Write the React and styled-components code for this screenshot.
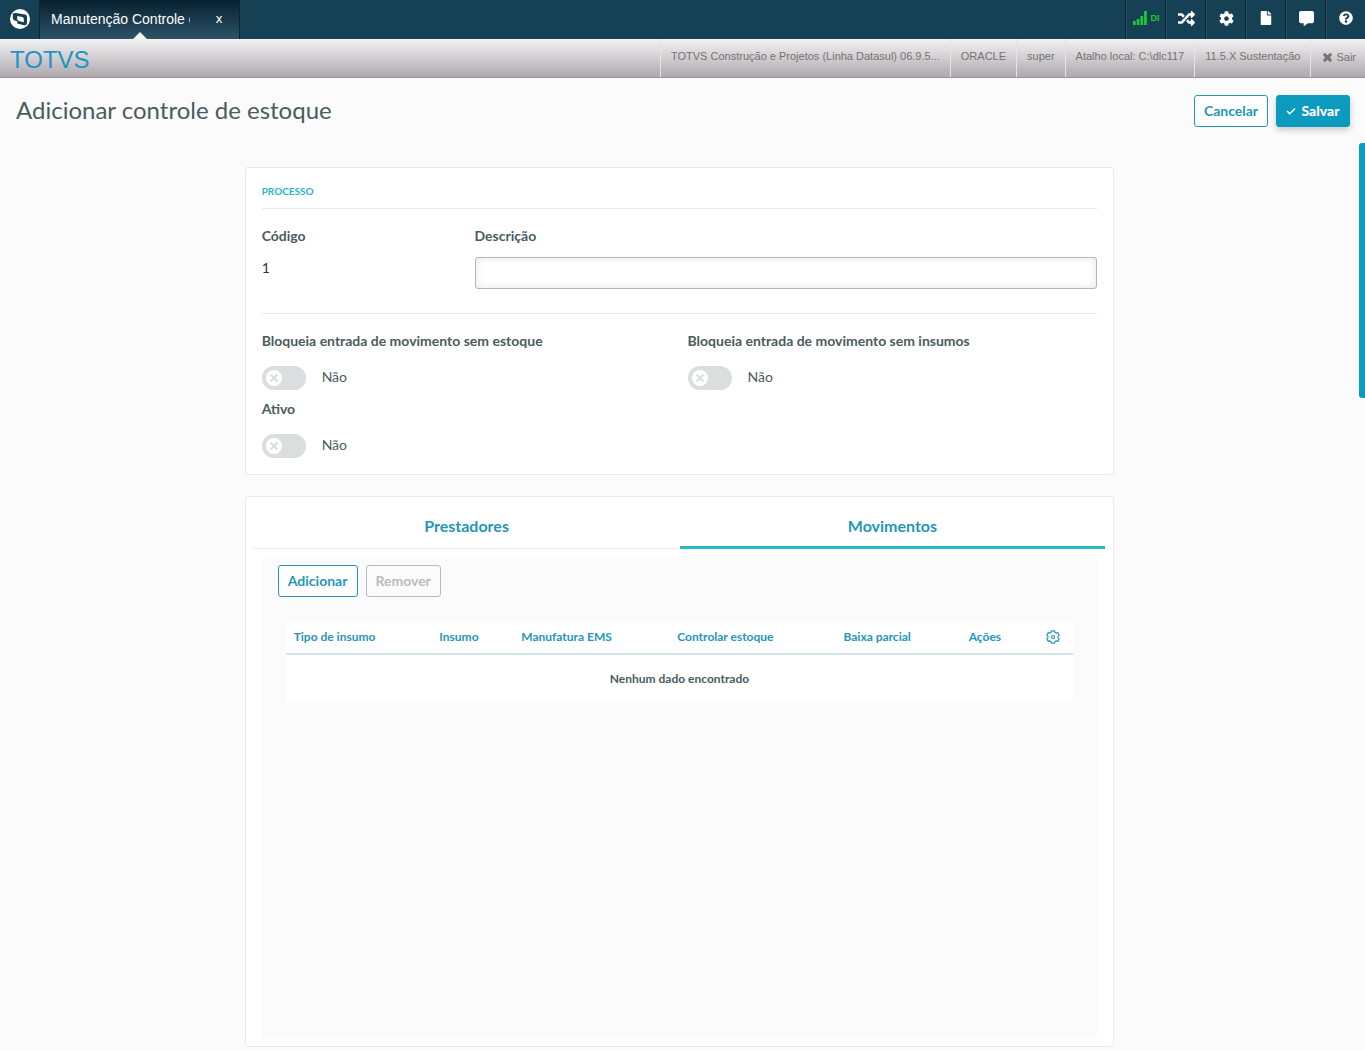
import React, { useState } from 'react';
import styled, { createGlobalStyle, css } from 'styled-components';
import {
  FaRandom,
  FaCog,
  FaFile,
  FaCommentAlt,
  FaQuestionCircle,
  FaTimes,
} from 'react-icons/fa';

const blue = '#2596b8';
const teal = '#29b6c5';
const gray = '#4a5c60';
const line = '#eaeaea';

const GlobalStyle = createGlobalStyle`
  * {
    box-sizing: border-box;
  }
  body {
    margin: 0;
    background: #fbfbfb;
    color: ${gray};
    font: 14px/22px Lato, sans-serif;
  }
  button, input {
    font: inherit;
  }
`;

const Page = styled.div`
  display: flex;
  flex-direction: column;
  height: 100vh;
  overflow: hidden;
`;

const TopBar = styled.header`
  display: flex;
  flex: none;
  height: 39px;
  background: #164154;
  font-family: 'Liberation Sans', sans-serif;
`;

const LogoButton = styled.button`
  display: grid;
  place-items: center;
  width: 40px;
  padding: 0 0 1px;
  border: 0;
  border-right: 1px solid #0a2635;
  background: none;
`;

const WindowTab = styled.div`
  position: relative;
  display: flex;
  align-items: center;
  justify-content: space-between;
  width: 200px;
  padding: 0 14px 2px 11px;
  border-right: 1px solid #0a2635;
  background: linear-gradient(#07202f, #2c5368);
  color: #fff;

  &::after {
    content: '';
    position: absolute;
    bottom: 0;
    left: calc(50% - 7px);
    border: 7px solid transparent;
    border-top: 0;
    border-bottom-color: #f4f4f4;
  }
`;

const TabTitle = styled.span`
  width: 139px;
  overflow: hidden;
  white-space: nowrap;
`;

const TabClose = styled.button`
  width: 12px;
  padding: 0;
  border: 0;
  background: none;
  color: #fff;
  font: 12px 'DejaVu Sans', sans-serif;
`;

const Tools = styled.div`
  display: flex;
  margin-left: auto;
`;

const Tool = styled.button`
  display: flex;
  align-items: center;
  justify-content: center;
  gap: 4px;
  width: 40px;
  padding: 0 0 3px 1px;
  border: 0;
  border-left: 1px solid #0a2635;
  box-shadow: inset 1px 0 #2c5163;
  background: none;
  color: ${(props) => (props.$online ? '#1fc934' : '#fff')};
  font-size: 9px;
  font-weight: 700;
`;

const BrandBar = styled.div`
  display: flex;
  flex: none;
  justify-content: space-between;
  height: 39px;
  border-bottom: 1px solid #979197;
  background: linear-gradient(#f2f2f2, #afa8af);
  font-family: 'Liberation Sans', sans-serif;
`;

const Brand = styled.div`
  padding-left: 10px;
  color: #1c94c4;
  font-size: 24px;
  line-height: 41px;
`;

const Session = styled.div`
  display: flex;
  color: #737373;
  font-size: 11px;
  line-height: 35px;
`;

const SessionItem = styled.span`
  padding: 0 10px;
  border-left: 1px solid #e4e4e4;
`;

const Exit = styled.a`
  display: flex;
  align-items: center;
  gap: 3px;
  padding: 0 9px 2px 11px;
  border-left: 1px solid #e4e4e4;
  color: #737373;
  text-decoration: none;

  svg {
    stroke: currentColor;
    stroke-width: 50px;
    overflow: visible;
  }
`;

const PageHeader = styled.div`
  display: flex;
  flex: none;
  align-items: center;
  justify-content: space-between;
  height: 65px;
  padding: 0 15px 0 16px;
`;

const Title = styled.h1`
  margin: 0;
  padding-bottom: 2px;
  font-size: 24px;
  font-weight: 400;
`;

const Actions = styled.div`
  display: flex;
  gap: 8px;
`;

const Button = styled.button`
  height: 32px;
  min-width: ${(props) => props.$width}px;
  padding: 0 8px;
  border: 1px solid ${blue};
  border-radius: 3px;
  background: #fff;
  color: ${blue};
  font-weight: 700;
  line-height: 30px;

  ${(props) =>
    props.$primary &&
    css`
      display: flex;
      align-items: center;
      justify-content: center;
      gap: 5px;
      border-color: #0c9abe;
      background: #0c9abe;
      color: #fff;
      font-weight: 900;
      box-shadow: 0 3px 6px rgba(0, 0, 0, 0.2);
    `}

  &:disabled {
    border-color: #b6bdbf;
    background: #fbfbfb;
    color: #b6bdbf;
  }
`;

const Scroller = styled.main`
  display: flex;
  flex: 1;
  min-height: 0;
`;

const Content = styled.div`
  display: flex;
  flex: 1;
  flex-direction: column;
  align-items: center;
  gap: 21px;
  padding: 24px 0 0;
`;

const ScrollThumb = styled.div`
  flex: none;
  width: 6px;
  height: 255px;
  border-radius: 3px 0 0 3px;
  background: #0c9abe;
`;

const Card = styled.section`
  width: 64%;
  min-width: 640px;
  border: 1px solid ${line};
  border-radius: 3px;
  background: #fff;
`;

const FormCard = styled(Card)`
  padding: 16px 16px 12px;
`;

const SectionTitle = styled.h2`
  margin: 0 0 16px;
  padding-bottom: 9px;
  border-bottom: 1px solid ${line};
  color: ${teal};
  font-size: 10px;
  font-weight: 700;
  line-height: 15px;
`;

const FieldRow = styled.div`
  display: grid;
  grid-template-columns: repeat(4, 1fr);
  gap: 16px;
  padding-bottom: 24px;
  border-bottom: 1px solid ${line};
`;

const WideField = styled.div`
  grid-column: span 3;
`;

const SwitchGrid = styled.div`
  display: grid;
  grid-template-columns: 1fr 1fr;
  column-gap: 16px;
  padding-top: 16px;
`;

const Label = styled.label`
  display: block;
  font-weight: 700;
`;

const Value = styled.output`
  display: block;
  padding-top: 10px;
  color: #2b3538;
`;

const TextInput = styled.input`
  display: block;
  width: 100%;
  height: 32px;
  margin-top: 10px;
  padding: 0 8px;
  border: 1px solid #b2b6b8;
  border-radius: 3px;
  box-shadow: inset 0 0 8px rgba(0, 0, 0, 0.1);
`;

const SwitchField = styled.div`
  height: 68px;

  &:last-child {
    height: 64px;
  }
`;

const SwitchLine = styled.div`
  display: flex;
  align-items: center;
  gap: 16px;
  padding-top: 14px;
`;

const SwitchText = styled.span`
  padding-bottom: 2px;
`;

const SwitchTrack = styled.span`
  position: relative;
  width: 44px;
  height: 24px;
  padding: 4px;
  border-radius: 12px;
  background: ${(props) => (props.$on ? teal : '#dadedf')};

  input {
    position: absolute;
    inset: 0;
    width: 100%;
    height: 100%;
    margin: 0;
    opacity: 0;
  }

  svg {
    display: block;
    margin-left: ${(props) => (props.$on ? 20 : 0)}px;
  }
`;

const TabCard = styled(Card)`
  padding: 8px;
`;

const Tabs = styled.div`
  display: grid;
  grid-template-columns: 1fr 1fr;
  height: 44px;
`;

const Tab = styled.button`
  padding: 0 0 2px;
  border: solid ${line};
  border-width: 0 0 1px;
  background: none;
  color: ${blue};
  font-size: 16px;
  font-weight: 700;
  ${(props) =>
    props.$active &&
    css`
      padding-bottom: 0;
      border-color: ${teal};
      border-bottom-width: 3px;
    `}
`;

const Panel = styled.div`
  height: 481px;
  margin: 8px 8px 0;
  padding: 8px 16px;
  background: #fbfbfb;
`;

const TableWrap = styled.div`
  padding: 24px 8px 0;
`;

const Table = styled.table`
  width: 100%;
  border-collapse: collapse;
  table-layout: fixed;
  background: #fff;
  font-size: 12px;
  line-height: 18px;
`;

const HeadCell = styled.th`
  width: ${(props) => props.$width}%;
  height: 33px;
  padding: 0 8px;
  border-bottom: 2px solid #d3e5eb;
  color: ${blue};
  text-align: left;
`;

const EmptyCell = styled.td`
  height: 48px;
  padding: 0;
  font-weight: 700;
  text-align: center;
`;

const GearButton = styled.button`
  display: block;
  margin: 0 auto;
  padding: 0;
  border: 0;
  background: none;
  color: ${blue};

  svg {
    display: block;
  }
`;

const columns = [
  { name: 'Tipo de insumo', width: 18.5 },
  { name: 'Insumo', width: 10.4 },
  { name: 'Manufatura EMS', width: 19.8 },
  { name: 'Controlar estoque', width: 21.1 },
  { name: 'Baixa parcial', width: 15.9 },
  { name: 'Ações', width: 9.2 },
];

const session = [
  'TOTVS Construção e Projetos (Linha Datasul) 06.9.5...',
  'ORACLE',
  'super',
  'Atalho local: C:\\dlc117',
  '11.5.X Sustentação',
];

function Logo() {
  return (
    <svg width="22" height="22" viewBox="0 0 22 22">
      <circle cx="11" cy="11" r="10" fill="#fff" />
      <path
        d="M3.800 6Q4 4.800 7 5l9 1.600q2 .4 2 2.400v6q0 2.500-3 2.200l-6.800-1.700v-2.200l-2.600-.8q-1.800-.6-1.800-2.500Z"
        fill="#164154"
      />
      <path d="M8.200 8l5 1q1.600.4 1.600 2v3.200l-5-1.200q-1.600-.4-1.600-2Z" fill="#fff" />
    </svg>
  );
}

function SignalIcon() {
  return (
    <svg width="14" height="14" viewBox="0 0 14 14" fill="currentColor">
      <path d="M0 10h2.700v4H0zM3.700 8h2.700v6H3.700zM7.400 5h2.700v9H7.400zM11.100 0h2.700v14h-2.700z" />
    </svg>
  );
}

function CheckIcon() {
  return (
    <svg width="10" height="8" viewBox="0 0 10 8" fill="none">
      <path d="m1 4 2.700 2.700L9 1.500" stroke="currentColor" strokeWidth="1.5" />
    </svg>
  );
}

function GearIcon() {
  return (
    <svg
      width="14"
      height="14"
      viewBox="0 0 14 14"
      fill="none"
      stroke="currentColor"
      strokeWidth="1.2"
      strokeLinejoin="round"
    >
      <path d="M5 2.500 5.500.8h3L9 2.500l1 .6 1.700-.5 1.500 2.600L12 6.400v1.200l1.200 1.200-1.500 2.600-1.700-.5-1 .6-.5 1.700h-3L5 11.500l-1-.6-1.700.5L.8 8.800 2 7.600V6.400L.8 5.200l1.500-2.600 1.700.5Z" />
      <circle cx="7" cy="7" r="1.500" />
    </svg>
  );
}

function Switch({ id, label }) {
  const [on, setOn] = useState(false);
  return (
    <SwitchField>
      <Label htmlFor={id}>{label}</Label>
      <SwitchLine>
        <SwitchTrack $on={on}>
          <svg width="16" height="16" viewBox="0 0 16 16">
            <circle cx="8" cy="8" r="8" fill="#fff" />
            {!on && (
              <path d="m4.500 4.500 7 7m0-7-7 7" stroke="#dadedf" strokeWidth="2" />
            )}
          </svg>
          <input
            id={id}
            type="checkbox"
            role="switch"
            checked={on}
            onChange={() => setOn(!on)}
          />
        </SwitchTrack>
        <SwitchText>{on ? 'Sim' : 'Não'}</SwitchText>
      </SwitchLine>
    </SwitchField>
  );
}

function Header() {
  return (
    <>
      <TopBar>
        <LogoButton aria-label="Menu">
          <Logo />
        </LogoButton>
        <WindowTab>
          <TabTitle>Manutenção Controle d</TabTitle>
          <TabClose>x</TabClose>
        </WindowTab>
        <Tools>
          <Tool $online>
            <SignalIcon />
            DI
          </Tool>
          <Tool aria-label="Alternar">
            <FaRandom size={17} />
          </Tool>
          <Tool aria-label="Configurações">
            <FaCog size={15} />
          </Tool>
          <Tool aria-label="Documentos">
            <FaFile size={14} />
          </Tool>
          <Tool aria-label="Mensagens">
            <FaCommentAlt size={15} />
          </Tool>
          <Tool aria-label="Ajuda">
            <FaQuestionCircle size={14} />
          </Tool>
        </Tools>
      </TopBar>
      <BrandBar>
        <Brand>TOTVS</Brand>
        <Session>
          {session.map((text) => (
            <SessionItem key={text}>{text}</SessionItem>
          ))}
          <Exit href="#sair">
            <FaTimes size={11} />
            Sair
          </Exit>
        </Session>
      </BrandBar>
    </>
  );
}

function ProcessForm() {
  return (
    <FormCard>
      <SectionTitle>PROCESSO</SectionTitle>
      <FieldRow>
        <div>
          <Label htmlFor="codigo">Código</Label>
          <Value id="codigo">1</Value>
        </div>
        <WideField>
          <Label htmlFor="descricao">Descrição</Label>
          <TextInput id="descricao" type="text" />
        </WideField>
      </FieldRow>
      <SwitchGrid>
        <Switch id="estoque" label="Bloqueia entrada de movimento sem estoque" />
        <Switch id="insumos" label="Bloqueia entrada de movimento sem insumos" />
        <Switch id="ativo" label="Ativo" />
      </SwitchGrid>
    </FormCard>
  );
}

function Movements() {
  const [active, setActive] = useState('Movimentos');
  return (
    <TabCard>
      <Tabs role="tablist">
        {['Prestadores', 'Movimentos'].map((name) => (
          <Tab
            key={name}
            role="tab"
            aria-selected={name === active}
            $active={name === active}
            onClick={() => setActive(name)}
          >
            {name}
          </Tab>
        ))}
      </Tabs>
      <Panel role="tabpanel">
        <Actions>
          <Button $width={80}>Adicionar</Button>
          <Button $width={75} disabled>
            Remover
          </Button>
        </Actions>
        <TableWrap>
          <Table>
            <thead>
              <tr>
                {columns.map(({ name, width }) => (
                  <HeadCell key={name} $width={width}>
                    {name}
                  </HeadCell>
                ))}
                <HeadCell>
                  <GearButton aria-label="Gerenciar colunas">
                    <GearIcon />
                  </GearButton>
                </HeadCell>
              </tr>
            </thead>
            <tbody>
              <tr>
                <EmptyCell colSpan={7}>Nenhum dado encontrado</EmptyCell>
              </tr>
            </tbody>
          </Table>
        </TableWrap>
      </Panel>
    </TabCard>
  );
}

export default function App() {
  return (
    <Page>
      <GlobalStyle />
      <Header />
      <PageHeader>
        <Title>Adicionar controle de estoque</Title>
        <Actions>
          <Button $width={74}>Cancelar</Button>
          <Button $width={74} $primary>
            <CheckIcon />
            Salvar
          </Button>
        </Actions>
      </PageHeader>
      <Scroller>
        <Content>
          <ProcessForm />
          <Movements />
        </Content>
        <ScrollThumb />
      </Scroller>
    </Page>
  );
}
